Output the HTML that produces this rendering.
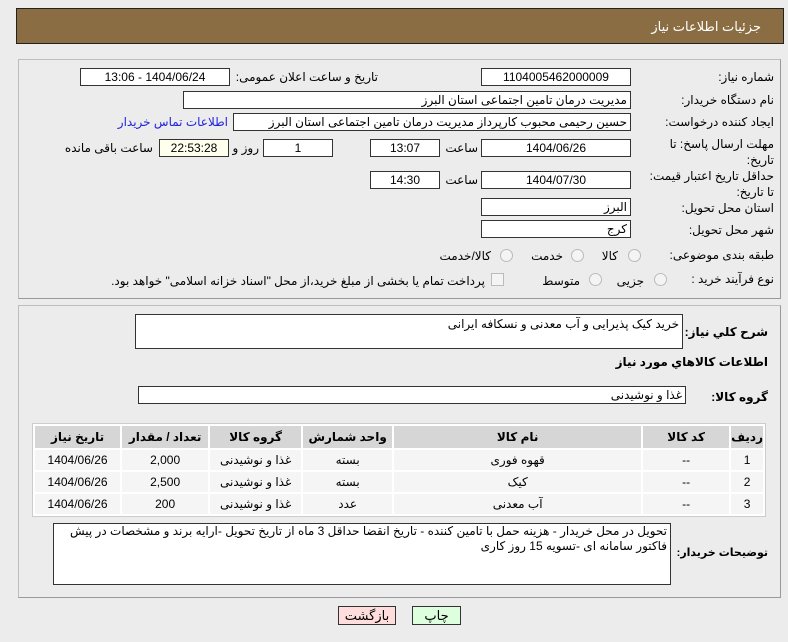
<!DOCTYPE html>
<html><head><meta charset="utf-8"><style>
body{margin:0;width:788px;height:642px;background:#ececec;font-family:"Liberation Sans","DejaVu Sans",sans-serif;font-size:12px;color:#000;position:relative;overflow:hidden;direction:rtl}
.a{position:absolute;white-space:nowrap}
.hd{left:16px;top:8px;width:766px;height:34px;background:#8b6d44;border:1px solid #222}
.hd span{position:absolute;right:22px;top:10px;color:#fff;font-size:13px}
.pn{position:absolute;left:18px;right:7px;border:1px solid #bdbdbd;border-right-color:#999;border-bottom-color:#999}
.b{position:absolute;background:#fff;border:1px solid #333;height:16px;line-height:16px;box-sizing:content-box;font-size:12px}
.c{text-align:center}
.r{text-align:right;padding-right:3px}
.l{font-size:12px}
.bl{font-size:12px;font-weight:bold}
.rad{position:absolute;width:11px;height:11px;border-radius:50%;border:1px solid #bbb;background:#f4f4f4}
table{border-collapse:separate;border-spacing:2px;position:absolute;left:32px;top:423px;width:734px;background:#fff;border:1px solid #ccc}
td,th{font-size:12px;text-align:center;height:20px;padding:0}
th{background:#d6d6d6;height:22px}
td{background:#f5f5f5}
</style></head><body>
<div class="a hd"><span>جزئیات اطلاعات نیاز</span></div>
<div class="pn" style="top:59px;height:238px"></div>
<div class="pn" style="top:305px;height:291px"></div>

<div class="a l" style="right:14px;top:70px">شماره نیاز:</div>
<div class="b c" style="left:481px;top:68px;width:148px">1104005462000009</div>
<div class="a l" style="right:410px;top:70px">تاریخ و ساعت اعلان عمومی:</div>
<div class="b c" style="left:80px;top:68px;width:148px">1404/06/24 - 13:06</div>

<div class="a l" style="right:14px;top:93px">نام دستگاه خریدار:</div>
<div class="b r" style="left:183px;top:91px;width:443px">مدیریت درمان تامین اجتماعی استان البرز</div>

<div class="a l" style="right:14px;top:115px">ایجاد کننده درخواست:</div>
<div class="b r" style="left:233px;top:113px;width:393px">حسین رحیمی محبوب کارپرداز مدیریت درمان تامین اجتماعی استان البرز</div>
<div class="a l" style="right:560px;top:115px;color:#2222dd">اطلاعات تماس خریدار</div>

<div class="a l" style="right:14px;top:136px;line-height:16px;text-align:right">مهلت ارسال پاسخ: تا<br>تاریخ:</div>
<div class="b c" style="left:481px;top:139px;width:148px">1404/06/26</div>
<div class="a l" style="right:310px;top:141px">ساعت</div>
<div class="b c" style="left:370px;top:139px;width:68px">13:07</div>
<div class="b c" style="left:263px;top:139px;width:68px">1</div>
<div class="a l" style="right:529px;top:141px">روز و</div>
<div class="b c" style="left:159px;top:139px;width:68px;background:#ffffee">22:53:28</div>
<div class="a l" style="right:635px;top:141px">ساعت باقی مانده</div>

<div class="a l" style="right:14px;top:168px;line-height:16px;text-align:right">حداقل تاریخ اعتبار قیمت:<br>تا تاریخ:</div>
<div class="b c" style="left:481px;top:171px;width:148px">1404/07/30</div>
<div class="a l" style="right:310px;top:173px">ساعت</div>
<div class="b c" style="left:370px;top:171px;width:68px">14:30</div>

<div class="a l" style="right:14px;top:201px">استان محل تحویل:</div>
<div class="b r" style="left:481px;top:198px;width:145px">البرز</div>
<div class="a l" style="right:14px;top:223px">شهر محل تحویل:</div>
<div class="b r" style="left:481px;top:220px;width:145px">کرج</div>

<div class="a l" style="right:14px;top:248px">طبقه بندی موضوعی:</div>
<div class="rad" style="left:628px;top:249px"></div><div class="a l" style="right:170px;top:249px">کالا</div>
<div class="rad" style="left:571px;top:249px"></div><div class="a l" style="right:225px;top:249px">خدمت</div>
<div class="rad" style="left:500px;top:249px"></div><div class="a l" style="right:297px;top:249px">کالا/خدمت</div>

<div class="a l" style="right:14px;top:272px">نوع فرآیند خرید :</div>
<div class="rad" style="left:654px;top:273px"></div><div class="a l" style="right:144px;top:274px">جزیی</div>
<div class="rad" style="left:589px;top:273px"></div><div class="a l" style="right:208px;top:274px">متوسط</div>
<div class="a" style="left:491px;top:273px;width:11px;height:11px;border:1px solid #bbb;background:#f4f4f4"></div>
<div class="a l" style="right:303px;top:274px;font-size:12px">پرداخت تمام یا بخشی از مبلغ خرید،از محل "اسناد خزانه اسلامی" خواهد بود.</div>

<div class="a bl" style="right:20px;top:325px">شرح کلي نیاز:</div>
<div class="b r" style="left:135px;top:314px;width:543px;height:33px;line-height:18px">خرید کیک پذیرایی و آب معدنی و نسکافه ایرانی</div>
<div class="a bl" style="right:20px;top:355px">اطلاعات کالاهاي مورد نیاز</div>
<div class="a bl" style="right:20px;top:390px">گروه کالا:</div>
<div class="b r" style="left:138px;top:386px;width:543px">غذا و نوشیدنی</div>

<table>
<tr><th style="width:26px">ردیف</th><th style="width:86px">کد کالا</th><th style="width:247px">نام کالا</th><th style="width:89px">واحد شمارش</th><th style="width:91px">گروه کالا</th><th style="width:86px">تعداد / مقدار</th><th>تاریخ نیاز</th></tr>
<tr><td>1</td><td>--</td><td>قهوه فوری</td><td>بسته</td><td>غذا و نوشیدنی</td><td>2,000</td><td>1404/06/26</td></tr>
<tr><td>2</td><td>--</td><td>کیک</td><td>بسته</td><td>غذا و نوشیدنی</td><td>2,500</td><td>1404/06/26</td></tr>
<tr><td>3</td><td>--</td><td>آب معدنی</td><td>عدد</td><td>غذا و نوشیدنی</td><td>200</td><td>1404/06/26</td></tr>
</table>

<div class="a bl" style="right:20px;top:546px;font-size:11px">توضیحات خریدار:</div>
<div class="b" style="left:53px;top:523px;width:613px;height:60px;padding-right:3px;line-height:15px;white-space:normal;text-align:right;font-size:12px">تحویل در محل خریدار - هزینه حمل با تامین کننده - تاریخ انقضا حداقل  3 ماه از تاریخ تحویل -ارایه برند و مشخصات در پیش فاکتور سامانه ای -تسویه 15 روز کاری</div>

<div class="a c" style="left:338px;top:606px;width:56px;height:17px;line-height:17px;border:1px solid #333;background:#fdd;font-size:13px">بازگشت</div>
<div class="a c" style="left:412px;top:606px;width:47px;height:17px;line-height:17px;border:1px solid #333;background:#dfd;font-size:13px">چاپ</div>
</body></html>
